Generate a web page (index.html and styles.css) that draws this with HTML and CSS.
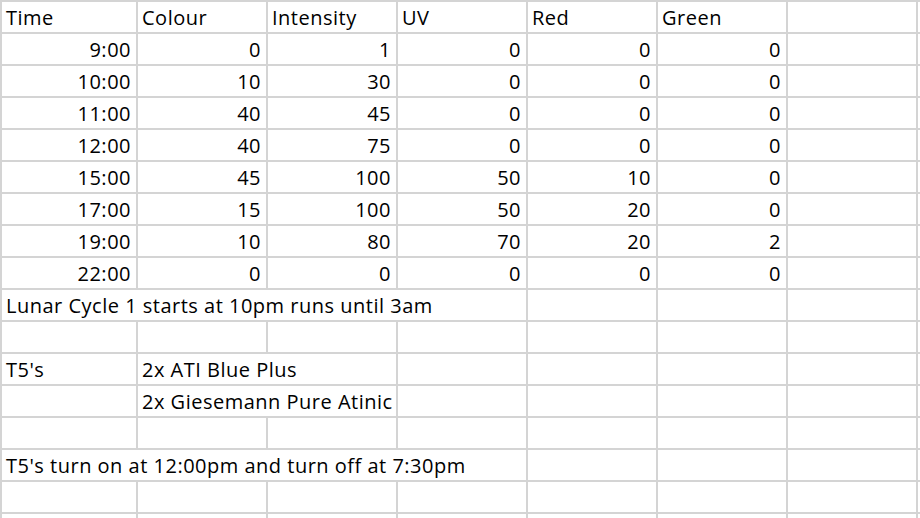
FILE: index.html
```html
<!DOCTYPE html>
<html>
<head>
<meta charset="utf-8">
<link rel="stylesheet" href="styles.css">
</head>
<body>
<div class="viewport">
<div class="sheet">
  <div class="c">Time</div><div class="c">Colour</div><div class="c">Intensity</div><div class="c">UV</div><div class="c">Red</div><div class="c">Green</div><div class="c"></div><div class="c"></div>

  <div class="c n">9:00</div><div class="c n">0</div><div class="c n">1</div><div class="c n">0</div><div class="c n">0</div><div class="c n">0</div><div class="c"></div><div class="c"></div>
  <div class="c n">10:00</div><div class="c n">10</div><div class="c n">30</div><div class="c n">0</div><div class="c n">0</div><div class="c n">0</div><div class="c"></div><div class="c"></div>
  <div class="c n">11:00</div><div class="c n">40</div><div class="c n">45</div><div class="c n">0</div><div class="c n">0</div><div class="c n">0</div><div class="c"></div><div class="c"></div>
  <div class="c n">12:00</div><div class="c n">40</div><div class="c n">75</div><div class="c n">0</div><div class="c n">0</div><div class="c n">0</div><div class="c"></div><div class="c"></div>
  <div class="c n">15:00</div><div class="c n">45</div><div class="c n">100</div><div class="c n">50</div><div class="c n">10</div><div class="c n">0</div><div class="c"></div><div class="c"></div>
  <div class="c n">17:00</div><div class="c n">15</div><div class="c n">100</div><div class="c n">50</div><div class="c n">20</div><div class="c n">0</div><div class="c"></div><div class="c"></div>
  <div class="c n">19:00</div><div class="c n">10</div><div class="c n">80</div><div class="c n">70</div><div class="c n">20</div><div class="c n">2</div><div class="c"></div><div class="c"></div>
  <div class="c n">22:00</div><div class="c n">0</div><div class="c n">0</div><div class="c n">0</div><div class="c n">0</div><div class="c n">0</div><div class="c"></div><div class="c"></div>

  <div class="c span4">Lunar Cycle 1 starts at 10pm runs until 3am</div><div class="c"></div><div class="c"></div><div class="c"></div><div class="c"></div>

  <div class="c"></div><div class="c"></div><div class="c"></div><div class="c"></div><div class="c"></div><div class="c"></div><div class="c"></div><div class="c"></div>

  <div class="c">T5's</div><div class="c span2">2x ATI Blue Plus</div><div class="c"></div><div class="c"></div><div class="c"></div><div class="c"></div><div class="c"></div>

  <div class="c"></div><div class="c span2">2x Giesemann Pure Atinic</div><div class="c"></div><div class="c"></div><div class="c"></div><div class="c"></div><div class="c"></div>

  <div class="c"></div><div class="c"></div><div class="c"></div><div class="c"></div><div class="c"></div><div class="c"></div><div class="c"></div><div class="c"></div>

  <div class="c span4">T5's turn on at 12:00pm and turn off at 7:30pm</div><div class="c"></div><div class="c"></div><div class="c"></div><div class="c"></div>

  <div class="c"></div><div class="c"></div><div class="c"></div><div class="c"></div><div class="c"></div><div class="c"></div><div class="c"></div><div class="c"></div>
  <div class="c"></div><div class="c"></div><div class="c"></div><div class="c"></div><div class="c"></div><div class="c"></div><div class="c"></div><div class="c"></div>
</div>
</div>
</body>
</html>
```

FILE: styles.css
```css
html, body {
  margin: 0;
  padding: 0;
  background: #ffffff;
  overflow: hidden;
  width: 920px;
  height: 518px;
}

.viewport {
  width: 920px;
  height: 518px;
  overflow: hidden;
}

.sheet {
  display: grid;
  grid-template-columns: 134px repeat(7, 128px);
  grid-auto-rows: 30px;
  gap: 2px;
  padding: 2px 0 0 2px;
  background: #d4d4d4;
  width: max-content;
  font-family: "Open Sans", "Liberation Sans", sans-serif;
  font-size: 20px;
  letter-spacing: 0.5px;
  color: #000000;
}

.c {
  background: #ffffff;
  padding: 1px 5px 0 4px;
  line-height: 30px;
  height: 30px;
  box-sizing: border-box;
  white-space: nowrap;
  overflow: hidden;
}

.n {
  text-align: right;
}

.span2 {
  grid-column: span 2;
}

.span4 {
  grid-column: span 4;
}
```
